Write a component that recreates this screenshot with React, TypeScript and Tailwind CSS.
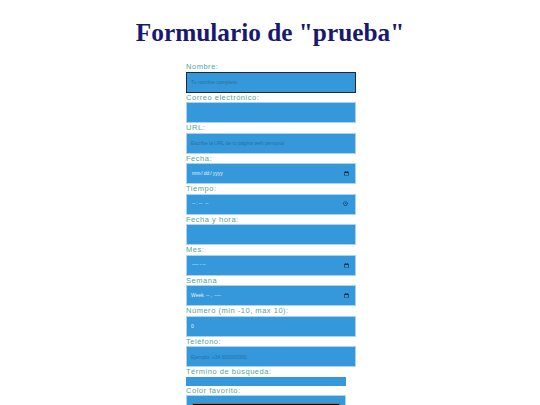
import React from 'react';

const fields: { label: string; type: string; placeholder?: string; value?: string }[] = [
    { label: 'Nombre:', type: 'text', placeholder: 'Tu nombre completo' },
    { label: 'Correo electrónico:', type: 'email' },
    { label: 'URL:', type: 'url', placeholder: 'Escribe la URL de tu página web personal' },
    { label: 'Fecha:', type: 'date' },
    { label: 'Tiempo:', type: 'time' },
    { label: 'Fecha y hora:', type: 'datetime' },
    { label: 'Mes:', type: 'month' },
    { label: 'Semana', type: 'week' },
    { label: 'Número (min -10, max 10):', type: 'number', value: '0' },
    { label: 'Teléfono:', type: 'tel', placeholder: 'Ejemplo: +34 600000000' },
];

export default function App() {
    return (
        <div className="w-[540px] h-[405px] overflow-hidden bg-white">
            <h1 className="text-center text-[25.3px] font-bold leading-[30px] pt-[17px] text-[#191970] [font-family:'Liberation_Serif',serif]">
                Formulario de "prueba"
            </h1>
            <form className="w-[170px] ml-[186px] mt-[15px] [font-family:'Liberation_Sans',sans-serif]">
                {fields.map((f, i) => (
                    <div key={f.label}>
                        <label className="block text-[7.5px] leading-[9.5px] tracking-[0.07em] text-[#55a697]">
                            {f.label}
                        </label>
                        <input
                            type={f.type}
                            placeholder={f.placeholder}
                            defaultValue={f.value}
                            className={`block w-[170px] h-[21px] px-[4px] text-[5px] text-[#e8f2fb] placeholder:text-[#2d6f9e] bg-[#3498db] border outline-none ${
                                i === 0 ? 'border-[#1d2a36] border-[1.5px]' : 'border-[#a9d3f1]'
                            }`}
                        />
                    </div>
                ))}
                <div>
                    <label className="block text-[7.5px] leading-[9.5px] tracking-[0.07em] text-[#55a697]">
                        Término de búsqueda:
                    </label>
                    <input type="search" className="block w-[160px] h-[9px] p-0 bg-[#3498db] border-0 outline-none" />
                </div>
                <div>
                    <label className="block text-[7.5px] leading-[9.5px] tracking-[0.07em] text-[#55a697]">
                        Color favorito:
                    </label>
                    <input type="color" className="block w-[160px] h-[21px] p-[3px] bg-[#3498db] border border-[#a9d3f1]" />
                </div>
            </form>
        </div>
    );
}
